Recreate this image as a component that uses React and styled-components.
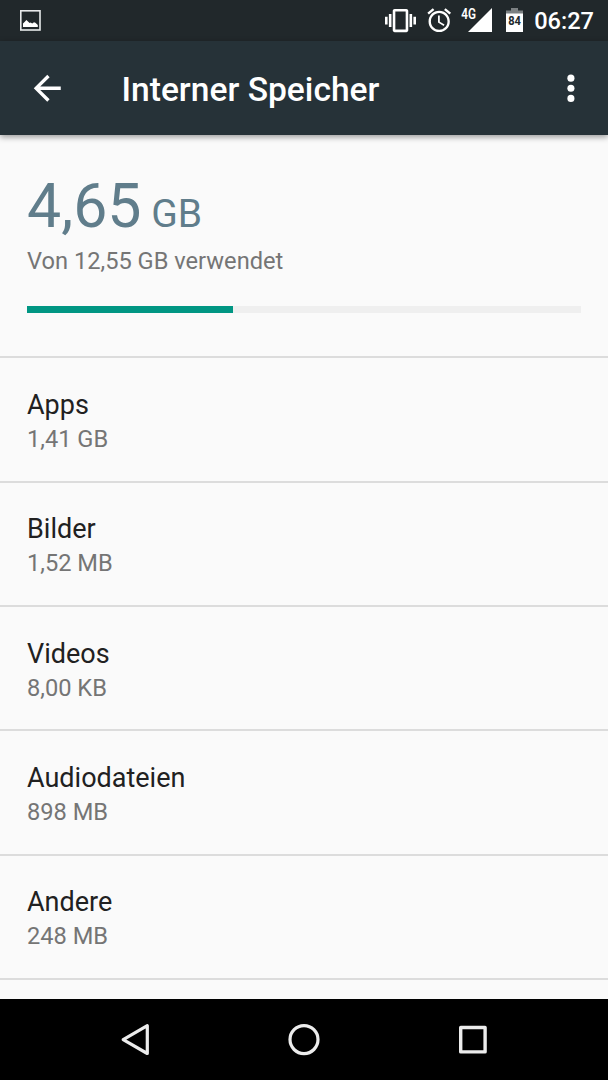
import React from "react";
import styled, { createGlobalStyle } from "styled-components";

const GlobalStyle = createGlobalStyle`
  *, *::before, *::after {
    box-sizing: border-box;
  }

  body {
    margin: 0;
    background: #fafafa;
    font-family: Roboto, "Noto Sans", sans-serif;
  }

  svg {
    display: block;
    flex: none;
  }
`;

const Screen = styled.div`
  display: flex;
  flex-direction: column;
  width: 608px;
  height: 1080px;
  overflow: hidden;
  background: #fafafa;
`;

const StatusBar = styled.div`
  display: flex;
  align-items: center;
  justify-content: space-between;
  flex: none;
  height: 40.5px;
  padding: 0 14px 0 20px;
  background: #21282b;
  color: #fff;
`;

const StatusIcons = styled.div`
  display: flex;
  align-items: center;
`;

const StatusIcon = styled.svg`
  margin-right: ${({ $gap }) => $gap}px;
  overflow: visible;
`;

const Clock = styled.span`
  font-size: 23.6px;
  font-weight: 500;
  line-height: 40px;
  padding-top: 2px;
  white-space: nowrap;
`;

const Toolbar = styled.header`
  display: flex;
  align-items: center;
  flex: none;
  height: 94.5px;
  padding: 0 17px 0 27px;
  background: #263238;
  color: #fff;
  box-shadow: 0 2px 6px rgba(0, 0, 0, 0.4);
`;

const IconButton = styled.button`
  padding: 0;
  border: 0;
  background: none;
  color: inherit;
`;

const Title = styled.h1`
  flex: 1;
  margin: 0 0 0 54px;
  padding-top: 5px;
  font-size: 33.6px;
  font-weight: 500;
  line-height: 40px;
`;

const Content = styled.main`
  flex: 1;
  min-height: 0;
  overflow: hidden;
`;

const Summary = styled.section`
  height: 221.4px;
  padding: 36px 27px 0;
`;

const Used = styled.div`
  font-size: 60.8px;
  line-height: 72px;
  color: #607d8b;
`;

const Unit = styled.span`
  font-size: 39px;
`;

const Total = styled.div`
  font-size: 23.65px;
  line-height: 34px;
  margin-top: -6px;
  color: #757575;
`;

const Track = styled.div`
  height: 7px;
  margin-top: 28px;
  background: #efefef;
`;

const Fill = styled.div`
  height: 100%;
  background: #009683;
`;

const Row = styled.div`
  height: 124.35px;
  padding: 29.5px 27px 0;
  border-top: 2px solid #dcdcdc;
`;

const RowTitle = styled.div`
  font-size: 27px;
  line-height: 34px;
  color: #212121;
`;

const RowValue = styled.div`
  font-size: 23.65px;
  line-height: 34px;
  color: #757575;
`;

const NavBar = styled.nav`
  display: grid;
  grid-template-columns: repeat(3, 169px);
  place-content: center;
  place-items: center;
  flex: none;
  height: 81px;
  background: #000;
  color: #ececec;
`;

const rows = [
  { title: "Apps", value: "1,41 GB" },
  { title: "Bilder", value: "1,52 MB" },
  { title: "Videos", value: "8,00 KB" },
  { title: "Audiodateien", value: "898 MB" },
  { title: "Andere", value: "248 MB" },
];

const usedPercent = 37.1;

const PictureIcon = () => (
  <svg width="21" height="21" viewBox="0 0 21 21">
    <rect x="0.8" y="0.8" width="19.2" height="19.2" fill="none" stroke="#e8eaeb" strokeWidth="1.6" />
    <path d="M3 17v-3.6l1.8-1.7 1.6-1.6 1.6 1.4L9.6 13l1-.4 1.6.8 1.8-1.2 1.4.6 2.4 2.2v2z" fill="#fff" />
  </svg>
);

const VibrateIcon = () => (
  <StatusIcon $gap={9} width="31" height="31" viewBox="0 0 24 24" fill="currentColor">
    <path d="M0 15h2V9H0v6zm3 2h2V7H3v10zm19-8v6h2V9h-2zm-3 8h2V7h-2v10zM16.5 3h-9C6.67 3 6 3.67 6 4.5v15c0 .83.67 1.5 1.5 1.5h9c.83 0 1.5-.67 1.5-1.5v-15c0-.83-.67-1.5-1.5-1.5zM16 19H8V5h8v14z" />
  </StatusIcon>
);

const AlarmIcon = () => (
  <StatusIcon $gap={8} width="28.4" height="28.4" viewBox="0 0 24 24" fill="currentColor">
    <path d="M22 5.72l-4.6-3.86-1.29 1.53 4.6 3.86L22 5.72zM7.88 3.39L6.6 1.86 2 5.71l1.29 1.53 4.59-3.85zM12.5 8H11v6l4.75 2.85.75-1.23-4-2.37V8zM12 4c-4.97 0-9 4.03-9 9s4.02 9 9 9c4.97 0 9-4.03 9-9s-4.03-9-9-9zm0 16c-3.87 0-7-3.13-7-7s3.13-7 7-7 7 3.13 7 7-3.13 7-7 7z" />
  </StatusIcon>
);

const SignalIcon = () => (
  <StatusIcon $gap={14} width="31" height="24" viewBox="0 0 31 24" fill="currentColor">
    <path d="M31 0v24H7z" />
    <text transform="translate(.2 10.6) scale(.84 1)" fontSize="14" fontWeight="600">
      4G
    </text>
  </StatusIcon>
);

const BatteryIcon = () => (
  <StatusIcon $gap={11} width="17" height="24" viewBox="0 0 17 24">
    <path d="M5 0h7v2.5h5V6H0V2.5h5z" fill="#7b8082" />
    <path d="M0 5.5h17V24H0z" fill="#fff" />
    <text transform="translate(2.2 17.4) scale(.84 1)" fontSize="13.2" fontWeight="700" fill="#21282b">
      84
    </text>
  </StatusIcon>
);

const BackArrow = () => (
  <svg width="40.5" height="40.5" viewBox="0 0 24 24" fill="currentColor">
    <path d="M20 11H7.83l5.59-5.59L12 4l-8 8 8 8 1.41-1.41L7.83 13H20v-2z" />
  </svg>
);

const MoreIcon = () => (
  <svg width="40.5" height="40.5" viewBox="0 0 24 24" fill="currentColor">
    <circle cx="11.8" cy="6" r="2.1" />
    <circle cx="11.8" cy="12" r="2.1" />
    <circle cx="11.8" cy="18" r="2.1" />
  </svg>
);

const StorageRow = ({ title, value }) => (
  <Row>
    <RowTitle>{title}</RowTitle>
    <RowValue>{value}</RowValue>
  </Row>
);

const App = () => {
  return (
    <>
      <GlobalStyle />
      <Screen>
        <StatusBar>
          <PictureIcon />
          <StatusIcons>
            <VibrateIcon />
            <AlarmIcon />
            <SignalIcon />
            <BatteryIcon />
            <Clock>06:27</Clock>
          </StatusIcons>
        </StatusBar>

        <Toolbar>
          <IconButton aria-label="Zurück">
            <BackArrow />
          </IconButton>
          <Title>Interner Speicher</Title>
          <IconButton aria-label="Mehr">
            <MoreIcon />
          </IconButton>
        </Toolbar>

        <Content>
          <Summary>
            <Used>
              4,65
              <Unit> GB</Unit>
            </Used>
            <Total>Von 12,55 GB verwendet</Total>
            <Track>
              <Fill style={{ width: `${usedPercent}%` }} />
            </Track>
          </Summary>
          {rows.map((row) => (
            <StorageRow key={row.title} {...row} />
          ))}
          <Row />
        </Content>

        <NavBar>
          <svg width="34" height="34" viewBox="0 0 34 34" fill="none" stroke="currentColor" strokeWidth="3.2">
            <path d="M5.2 16.6L29.3 2.7v27.8z" strokeLinejoin="round" />
          </svg>
          <svg width="34" height="34" viewBox="0 0 34 34" fill="none" stroke="currentColor" strokeWidth="3.2">
            <circle cx="17" cy="16.6" r="14" />
          </svg>
          <svg width="34" height="34" viewBox="0 0 34 34" fill="none" stroke="currentColor" strokeWidth="3.4">
            <rect x="4.7" y="4.5" width="24.4" height="24.4" strokeLinejoin="round" />
          </svg>
        </NavBar>
      </Screen>
    </>
  );
};

export default App;
